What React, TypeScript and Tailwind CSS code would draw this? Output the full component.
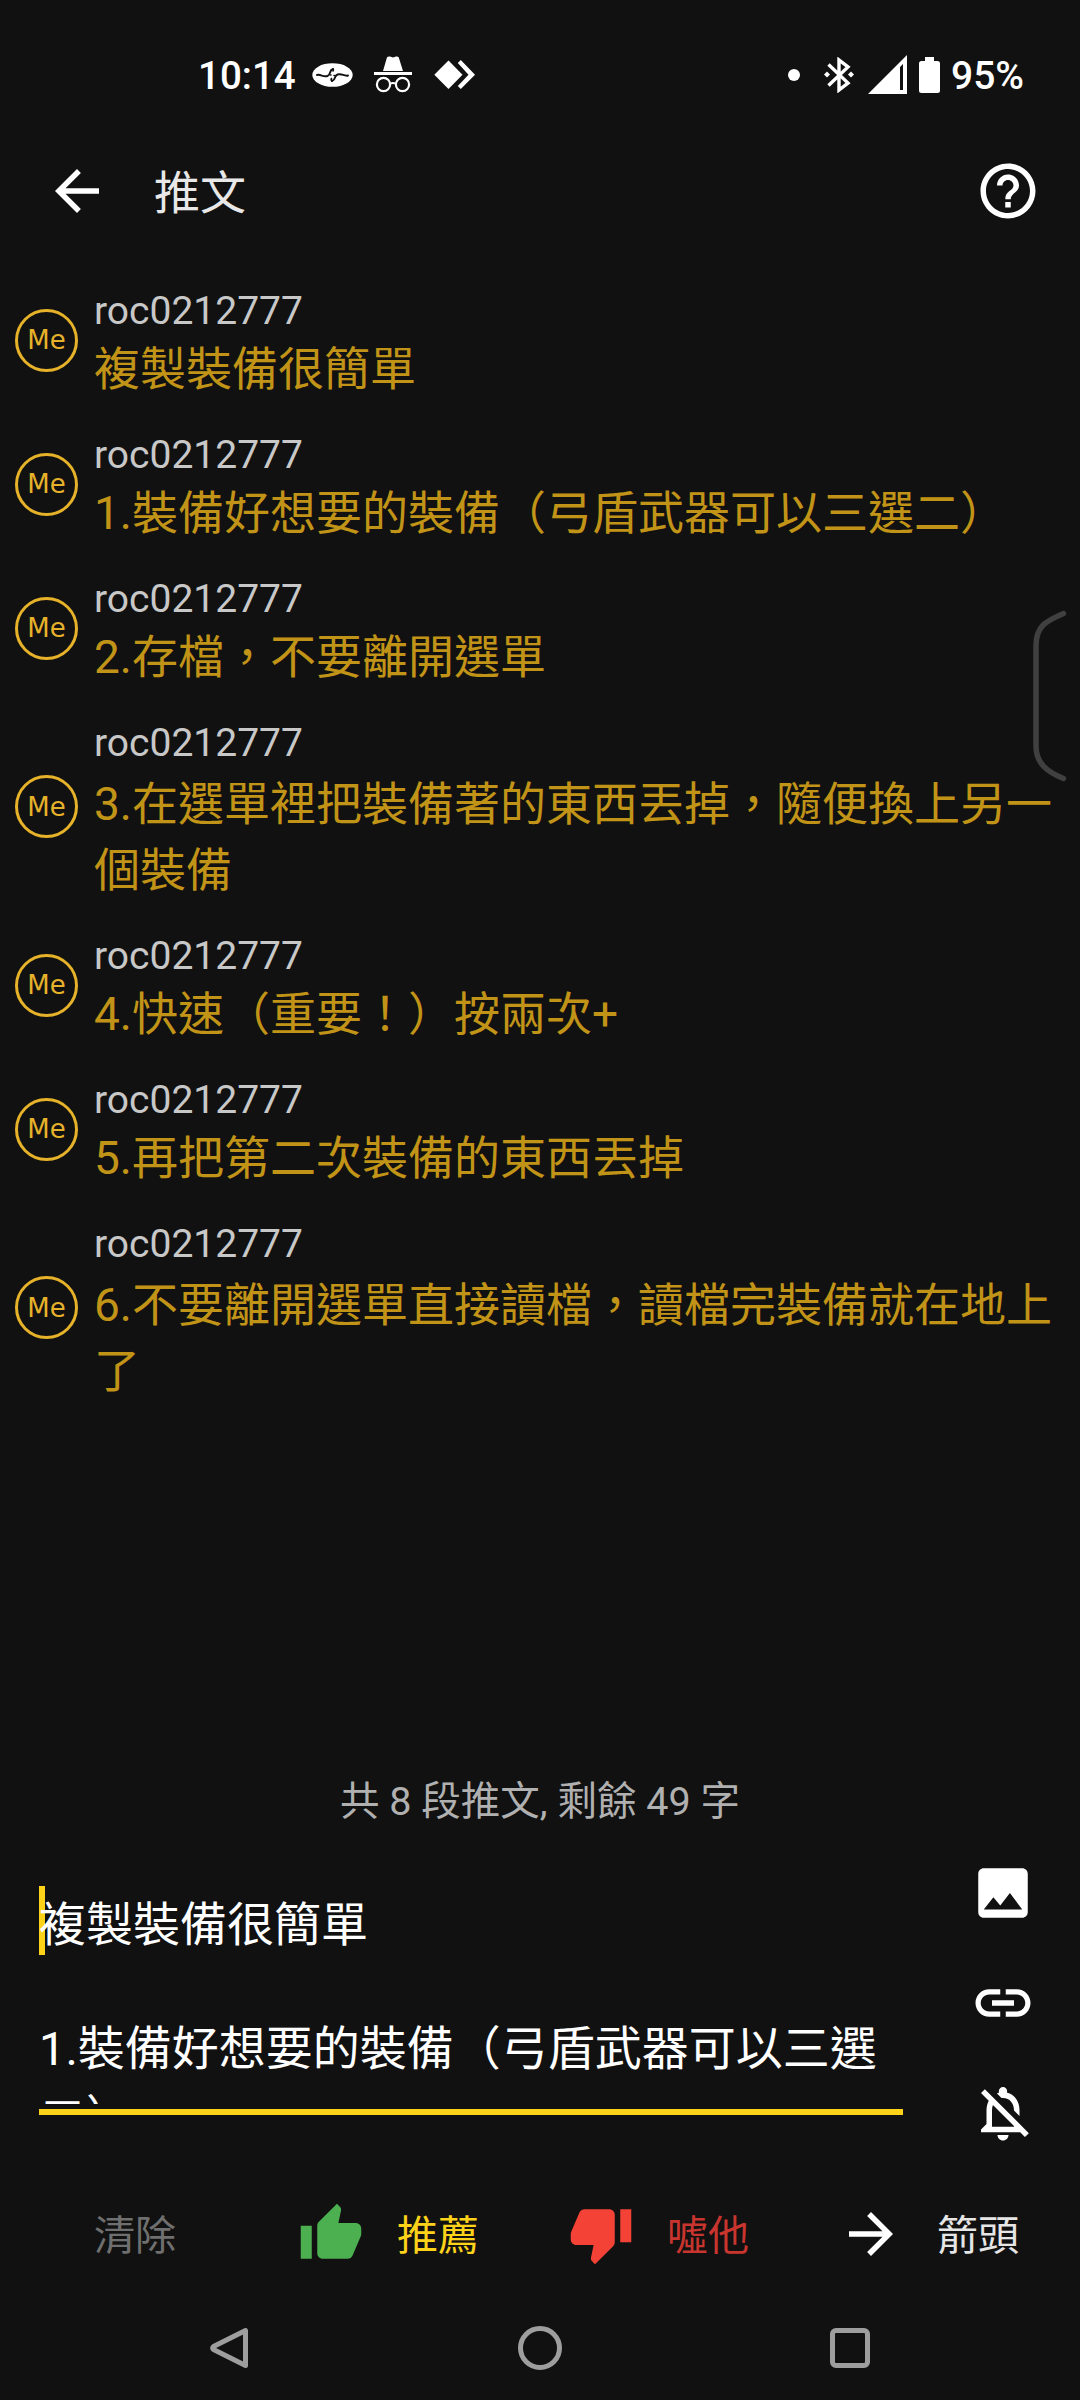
import { MdArrowBack, MdArrowForward, MdHelpOutline, MdImage, MdThumbDown, MdThumbUp } from "react-icons/md";

interface Push {
  id: number;
  user: string;
  text: string;
  long?: boolean;
}

const pushes: Push[] = [
  { id: 1, user: "roc0212777", text: "複製裝備很簡單" },
  { id: 2, user: "roc0212777", text: "1.裝備好想要的裝備（弓盾武器可以三選二）" },
  { id: 3, user: "roc0212777", text: "2.存檔，不要離開選單" },
  { id: 4, user: "roc0212777", text: "3.在選單裡把裝備著的東西丟掉，隨便換上另一個裝備", long: true },
  { id: 5, user: "roc0212777", text: "4.快速（重要！）按兩次+" },
  { id: 6, user: "roc0212777", text: "5.再把第二次裝備的東西丟掉" },
  { id: 7, user: "roc0212777", text: "6.不要離開選單直接讀檔，讀檔完裝備就在地上了", long: true },
];

const StatusBar = () => (
  <div className="flex h-[149px] shrink-0 items-center justify-between pr-[56px] pl-[198px] text-[38.5px] leading-[46px] font-medium text-white">
    <div className="flex items-center">
      <span className="w-[114px] pt-[2px]">10:14</span>
      <svg className="h-[24px] w-[41px]" viewBox="0 0 41 24">
        <ellipse cx="20.5" cy="12" rx="20.2" ry="11.8" fill="#fff" />
        <g fill="none" stroke="#111" strokeWidth="1.6" strokeLinecap="round">
          <path d="M5 12C9 11 11 14.500 15.500 13C19.500 11.500 16.500 7.500 21 6" strokeWidth="2" />
          <path d="M36 12.500C32 13.500 30 10 25.500 11.500C21.500 13 24.500 16.500 20 18" strokeWidth="2" />
          <path d="M21 6q1 1 0 2M20 18q-1.500-1-.500-2.500M18.500 12h.500M22 12.500h.500" />
        </g>
      </svg>
      <svg className="ml-[21px] h-[37px] w-[38px]" viewBox="0 0 38 37">
        <path d="M13 1.200q1.500 -1.200 3 -.600l3 1 3-1q1.700-.500 2.700 .600l4.300 13.800h-20z" fill="#fff" />
        <path d="M0 16h38v3H0z" fill="#fff" />
        <g fill="none" stroke="#fff" strokeWidth="2.200">
          <circle cx="9.500" cy="28.500" r="6.600" />
          <circle cx="28.500" cy="28.500" r="6.600" />
          <path d="M16 27.500q3-1 6 0" />
        </g>
      </svg>
      <svg className="ml-[22px] h-[30px] w-[41px]" viewBox="0 0 41 30" fill="#fff">
        <path d="M14.500 .500L28.500 14.700 14.500 29 .300 14.700z" />
        <path d="M23.800 3L26.800 0 41 14.700 26.800 29 23.800 26 34.500 14.700z" />
      </svg>
    </div>
    <div className="flex items-center">
      <div className="size-[12px] rounded-full bg-white" />
      <svg className="ml-[24px] h-[36px] w-[30px]" viewBox="0 0 30 36">
        <path d="M4.500 7.500L24 26 15 33V3l9 7L4.500 28.500" fill="none" stroke="#fff" strokeWidth="3.400" />
        <path d="M3 14.500l3 3-3 3-3-3zM27 14.500l3 3-3 3-3-3z" fill="#fff" />
      </svg>
      <svg className="ml-[14px] h-[39px] w-[39px]" viewBox="0 0 39 39">
        <path d="M39 0v39H0zM32 12v23h3V9z" fill="#fff" fillRule="evenodd" />
      </svg>
      <svg className="ml-[12px] h-[36px] w-[21px]" viewBox="0 0 21 36">
        <path d="M6 0h9v4h3.500Q21 4 21 6.500V33.500Q21 36 18.500 36H2.500Q0 36 0 33.500V6.500Q0 4 2.500 4H6z" fill="#fff" />
      </svg>
      <span className="ml-[11px] w-[73px] pt-[2px] text-[39px]">95%</span>
    </div>
  </div>
);

const Avatar = () => (
  <div className="flex size-[63px] shrink-0 items-center justify-center rounded-full border-[3px] border-[#e6b22a] font-['DejaVu_Sans'] text-[26px] leading-none text-[#e6b22a]">
    Me
  </div>
);

const PushRow = ({ push }: { push: Push }) => (
  <article className="flex items-center pr-[16px] pl-[15px]">
    <Avatar />
    <div className="ml-[16px] flex-1 pt-[20px] pb-[10px]">
      <div className="text-[39px] leading-[46px] text-[#c8c8c8]">{push.user}</div>
      <p className={`text-[46px] leading-[66px] text-[#c19418] ${push.long ? "mt-[5px]" : "mt-[2px]"}`}>{push.text}</p>
    </div>
  </article>
);

const Editor = () => (
  <div className="flex h-[334px] shrink-0 justify-between pr-[44px] pl-[39px]">
    <div className="w-[864px]">
      <div className="relative h-[266px] overflow-hidden pt-[52px] text-[47px] leading-[69px] text-white">
        {/* caret */}
        <div className="absolute top-[48px] left-0 h-[69px] w-[6px] bg-[#fdd31a]" />
        <p className="relative">複製裝備很簡單</p>
        <p className="relative mt-[55px]">1.裝備好想要的裝備（弓盾武器可以三選二）</p>
      </div>
      <div className="mt-[5px] h-[6px] bg-[#fdd31a]" />
    </div>
    <div className="flex w-[66px] flex-col gap-[44px] pt-[22px] text-white">
      <MdImage className="size-[66px]" />
      <svg className="size-[66px]" viewBox="0 0 24 24" fill="currentColor">
        <path d="M3.900 12c0-1.710 1.390-3.100 3.100-3.100h4V7H7c-2.760 0-5 2.240-5 5s2.240 5 5 5h4v-1.900H7c-1.710 0-3.100-1.390-3.100-3.100zM8 13h8v-2H8v2zm9-6h-4v1.900h4c1.710 0 3.100 1.390 3.100 3.100s-1.390 3.100-3.100 3.100h-4V17h4c2.760 0 5-2.240 5-5s-2.240-5-5-5z" />
      </svg>
      <svg className="size-[66px]" viewBox="0 0 24 24" fill="currentColor">
        <path d="M12 22c1.100 0 2-.9 2-2h-4c0 1.100.9 2 2 2zm0-15.500c2.490 0 4 2.020 4 4.500v.1l2 2V11c0-3.070-1.630-5.640-4.500-6.320V4c0-.83-.67-1.500-1.500-1.500s-1.500.67-1.500 1.500v.68c-.24.06-.47.15-.69.23l1.640 1.640c.18-.02.36-.05.55-.05zM5.410 3.350L4 4.760l2.810 2.810C6.290 8.570 6 9.740 6 11v5l-2 2v1h14.240l1.740 1.740 1.410-1.410L5.410 3.350zM16 17H8v-6c0-.68.12-1.320.34-1.900L16 16.760V17z" />
      </svg>
    </div>
  </div>
);

const ActionBar = () => (
  <div className="grid h-[124px] shrink-0 grid-cols-4 items-center text-[41px] leading-[50px]">
    <button className="pt-[3px] text-center text-[#6f6f6f]">清除</button>
    <button className="flex items-center gap-[33px] pl-[28px] text-[#fdd31a]">
      <MdThumbUp className="size-[66px] text-[#4caf50]" />
      <span className="pt-[3px]">推薦</span>
    </button>
    <button className="flex items-center gap-[33px] pl-[28px] text-[#c8352e]">
      <MdThumbDown className="size-[66px] text-[#f44336]" />
      <span className="pt-[3px]">噓他</span>
    </button>
    <button className="flex items-center gap-[33px] pl-[28px] text-[#e6e6e6]">
      <MdArrowForward className="size-[66px] text-white" />
      <span className="pt-[3px]">箭頭</span>
    </button>
  </div>
);

const NavBar = () => (
  <nav className="flex h-[104px] shrink-0 items-center justify-between pr-[210px] pl-[210px]">
    <svg className="h-[44px] w-[40px]" viewBox="0 0 40 44">
      <path d="M35.500 4.500v35L3.500 23.500q-1.500-1.500 0-3z" fill="none" stroke="#9e9e9e" strokeWidth="5" strokeLinejoin="round" />
    </svg>
    <div className="size-[44px] rounded-full border-[5px] border-[#9e9e9e]" />
    <div className="size-[40px] rounded-[6px] border-[5px] border-[#9e9e9e]" />
  </nav>
);

const App = () => {
  return (
    <div className="relative flex h-[2400px] w-[1080px] flex-col overflow-hidden bg-[#111111] font-['Roboto','Noto_Sans_CJK_TC',sans-serif] [text-spacing-trim:space-all]">
      <StatusBar />
      <header className="flex h-[84px] shrink-0 items-center pr-[39px] pl-[44px] text-white">
        <MdArrowBack className="size-[66px]" />
        <h1 className="ml-[44px] flex-1 pt-[3px] text-[46px] leading-[66px] text-[#e8e8e8]">推文</h1>
        <MdHelpOutline className="size-[66px]" />
      </header>
      <main className="flex-1 pt-[35px]">
        {pushes.map(push => (
          <PushRow key={push.id} push={push} />
        ))}
      </main>
      <div className="shrink-0 pb-[13px] text-center text-[39.5px] leading-[46px] text-[#b0b0b0]">共 8 段推文, 剩餘 49 字</div>
      <Editor />
      <ActionBar />
      <NavBar />
      {/* edge panel handle */}
      <svg className="absolute top-[608px] left-[1030px] h-[176px] w-[40px]" viewBox="0 0 40 176">
        <path d="M33.500 5.500C16 13 6 18 6 38V138C6 156 18 164 33.500 170.500" fill="none" stroke="#404040" strokeWidth="5.500" strokeLinecap="round" />
      </svg>
    </div>
  );
};

export default App;
